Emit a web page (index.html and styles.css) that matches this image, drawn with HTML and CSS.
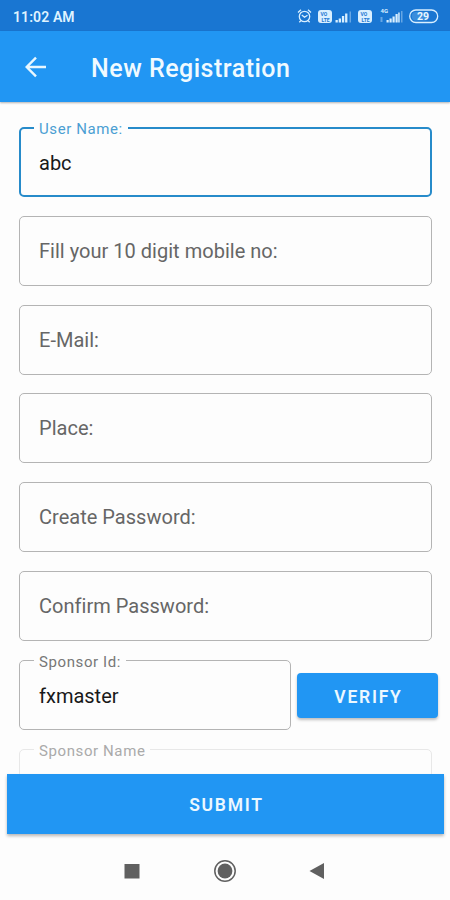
FILE: index.html
```html
<!DOCTYPE html>
<html lang="en">
<head>
<meta charset="utf-8">
<title>New Registration</title>
<link rel="stylesheet" href="styles.css">
</head>
<body>
<div class="screen">
  <div class="status">
    <span class="time">11:02 AM</span>
    <svg class="tray" width="150" height="31" viewBox="0 0 150 31" fill="none" stroke="#d9efff" stroke-width="1.3">
      <circle cx="14.5" cy="16.5" r="5.2"/>
      <path d="M8 12.5l3-2.7M21 12.5l-3-2.7M11.8 15l2.7 2.2 3-2M10.8 20.8L9.3 22.3M18.2 20.8l1.5 1.5"/>
      <g fill="#d9efff" stroke="none">
        <rect x="28" y="10" width="14" height="13" rx="3"/>
        <rect x="68" y="10" width="14" height="13" rx="3"/>
        <path d="M45.500 20h2.300v2.500h-2.300zM48.700 18.500h2.300v4h-2.300zM51.900 16h2.300v6.500h-2.300zM55.100 13.500h2.300v9h-2.300z"/>
        <path d="M96.500 20h2.200v2.500h-2.200zM99.500 18.500h2.200v4h-2.200zM102.500 16.500h2.200v6h-2.200zM105.500 14h2.200v8.500h-2.200zM108.200 12.500h1.500v10h-1.500z"/>
        <path opacity=".4" d="M59.500 11.500h1.500v11h-1.500zM111 11h1.500v11.500h-1.500z"/>
        <path opacity=".4" d="M90.500 17h2v5h-2z"/>
      </g>
      <g class="tiny">
        <text class="sim" x="30.500" y="16">VO</text><text class="sim" x="31.500" y="21.500">LTE</text>
        <text class="sim" x="70.500" y="16">VO</text><text class="sim" x="71.500" y="21.500">LTE</text>
        <text class="net" x="90.500" y="13">4G</text>
      </g>
      <rect x="119.700" y="10" width="28" height="12.500" rx="6.200"/>
      <rect x="121.800" y="12" width="17" height="8.500" rx="4" fill="#5ba4e6" stroke="none" opacity=".5"/>
      <text class="level" x="127" y="20">29</text>
    </svg>
  </div>
  <header class="bar">
    <svg class="back" width="22" height="22" viewBox="0 0 22 22" fill="none" stroke="#e8f7ff" stroke-width="2.4"><path d="M21 11H2.500M11 1.700L1.700 11l9.300 9.300"/></svg>
    <h1>New Registration</h1>
  </header>
  <main class="form">
    <div class="field focused"><label>User Name:</label><span class="value">abc</span></div>
    <div class="field"><span class="hint">Fill your 10 digit mobile no:</span></div>
    <div class="field"><span class="hint">E-Mail:</span></div>
    <div class="field"><span class="hint">Place:</span></div>
    <div class="field"><span class="hint">Create Password:</span></div>
    <div class="field"><span class="hint">Confirm Password:</span></div>
    <div class="row">
      <div class="field"><label>Sponsor Id:</label><span class="value">fxmaster</span></div>
      <button class="verify">VERIFY</button>
    </div>
    <div class="field disabled"><label>Sponsor Name</label></div>
  </main>
  <button class="submit">SUBMIT</button>
  <nav class="nav">
    <svg width="210" height="26" viewBox="0 0 210 26" fill="#606060">
      <rect x="4.500" y="6" width="15" height="14.500"/>
      <circle cx="105" cy="13" r="10.200" fill="none" stroke="#606060" stroke-width="1.500"/>
      <circle cx="105" cy="13" r="7.400"/>
      <path d="M189.500 13L204 5v16z"/>
    </svg>
  </nav>
</div>
</body>
</html>
```
FILE: styles.css
```css
* { box-sizing: border-box; }
body { margin: 0; background: #fdfdfd; font-family: Roboto, "Liberation Sans", sans-serif; }
.screen { width: 450px; height: 900px; display: flex; flex-direction: column; overflow: hidden; }
.status { height: 31px; flex: none; background: #1976d2; display: flex; justify-content: space-between; padding: 0 10px 0 13px; }
.time { color: #dff3ff; font-size: 14px; font-weight: 600; letter-spacing: .1px; line-height: 34px; }
.tiny text { fill: #1976d2; stroke: none; font-size: 5px; font-weight: 700; }
.tiny .net { fill: #d9efff; font-size: 6px; }
.level { fill: #e8f6ff; stroke: none; font-size: 10.5px; font-weight: 700; }
.bar { height: 71px; flex: none; background: #2196f3; display: flex; align-items: center; padding: 0 25px; gap: 44px; box-shadow: 0 1px 2px rgba(0,0,0,.3); position: relative; z-index: 1; }
.bar h1 { margin: 5px 0 0; color: #f0faff; font-size: 25px; font-weight: 500; letter-spacing: .5px; line-height: 32px; }
.form { height: 672px; flex: none; overflow: hidden; padding: 25px 18px 0 19px; display: flex; flex-direction: column; gap: 18.8px; }
.field { position: relative; flex: none; height: 70px; border: 1.5px solid #b4b4b4; border-radius: 5px; padding: 0 19px; display: flex; align-items: center; font-size: 20px; }
.hint { color: #666; letter-spacing: .02px; font-variant-ligatures: common-ligatures; }
.value { color: #191919; padding-top: 2px; }
.field label { position: absolute; left: 14px; top: -8px; padding: 0 5px; background: #fdfdfd; color: #777; font-size: 15px; line-height: 18px; letter-spacing: .6px; }
.focused { border: 2px solid #278bca; padding: 0 18px; }
.focused label { color: #4b9fd3; left: 13px; top: -9px; }
.disabled { border-color: #e8e8e8; }
.disabled label { color: #aaa; }
.row { display: flex; height: 70px; flex: none; gap: 6px; margin-right: -6px; align-items: center; }
.row .field { width: 272px; }
button { border: 0; margin: 0; padding: 2px 0 0 2px; background: #2196f3; color: #ecf8ff; font-family: inherit; font-size: 17.5px; font-weight: 600; letter-spacing: 1.75px; }
.verify { width: 141px; height: 45px; flex: none; margin-top: 2px; border-radius: 4px; box-shadow: 0 2px 3px rgba(0,0,0,.25); }
.submit { flex: none; height: 60px; margin: 0 6px 0 7px; box-shadow: 0 2px 3px rgba(0,0,0,.28); }
.nav { flex: 1; display: flex; justify-content: center; padding-top: 24px; }
```
